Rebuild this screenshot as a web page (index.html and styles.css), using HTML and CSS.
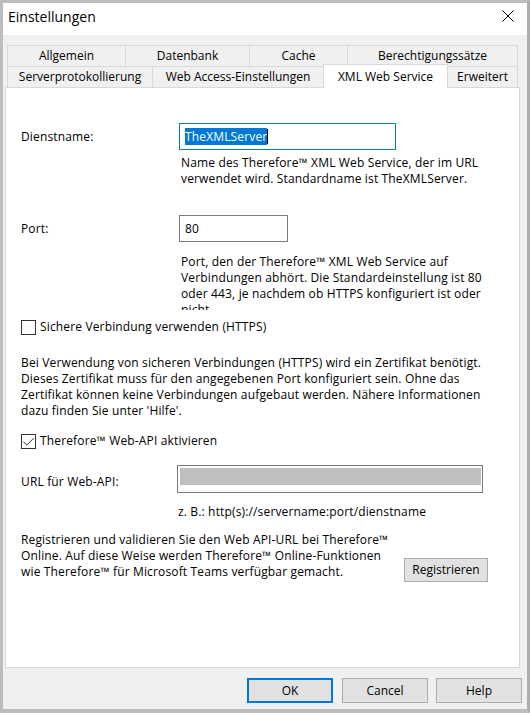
FILE: index.html
```html
<!DOCTYPE html>
<html lang="de">
<head>
<meta charset="utf-8">
<title>Einstellungen</title>
<link rel="stylesheet" href="styles.css">
</head>
<body>
<div class="window">
  <div class="titlebar">
    <span class="title">Einstellungen</span>
    <svg class="close" width="12" height="12" viewBox="0 0 12 12"><path d="M0.5 0.5 L11.5 11.5 M11.5 0.5 L0.5 11.5" stroke="#000" stroke-width="1" fill="none"/></svg>
  </div>
  <div class="dialog">
    <div class="tabs">
      <div class="tabrow">
        <div class="tab w-allg">Allgemein</div>
        <div class="tab w-daten">Datenbank</div>
        <div class="tab w-cache">Cache</div>
        <div class="tab w-berecht">Berechtigungssätze</div>
      </div>
      <div class="tabrow">
        <div class="tab w-server">Serverprotokollierung</div>
        <div class="tab w-web">Web Access-Einstellungen</div>
        <div class="tab w-xml selected">XML Web Service</div>
        <div class="tab w-erw">Erweitert</div>
      </div>
    </div>
    <div class="panel">
      <div class="field-row row-name">
        <span class="label">Dienstname:</span>
        <div class="textbox focused w-name"><span class="selection">TheXMLServer</span><span class="caret"></span></div>
      </div>
      <p class="desc desc-name">Name des Therefore™ XML Web Service, der im URL<br>verwendet wird. Standardname ist TheXMLServer.</p>

      <div class="field-row row-port">
        <span class="label">Port:</span>
        <div class="textbox w-port">80</div>
      </div>
      <p class="desc desc-port">Port, den der Therefore™ XML Web Service auf<br>Verbindungen abhört. Die Standardeinstellung ist 80<br>oder 443, je nachdem ob HTTPS konfiguriert ist oder<br>nicht.</p>

      <div class="check check-https">
        <svg class="box" width="15" height="15" viewBox="0 0 15 15"><rect x="0.5" y="0.5" width="14" height="14" fill="#fff" stroke="#333"/></svg>
        <span>Sichere Verbindung verwenden (HTTPS)</span>
      </div>

      <p class="para para-https">Bei Verwendung von sicheren Verbindungen (HTTPS) wird ein Zertifikat benötigt.<br>Dieses Zertifikat muss für den angegebenen Port konfiguriert sein. Ohne das<br>Zertifikat können keine Verbindungen aufgebaut werden. Nähere Informationen<br>dazu finden Sie unter 'Hilfe'.</p>

      <div class="check check-api">
        <svg class="box" width="15" height="15" viewBox="0 0 15 15"><rect x="0.5" y="0.5" width="14" height="14" fill="#fff" stroke="#333"/><path d="M2.3 7.6 L5.8 11.2 L12.6 4.2" fill="none" stroke="#333" stroke-width="1"/></svg>
        <span>Therefore™ Web-API aktivieren</span>
      </div>

      <div class="field-row row-url">
        <span class="label label-url">URL für Web-API:</span>
        <div class="textbox w-url"><div class="redacted"></div></div>
      </div>
      <p class="example">z. B.: http(s)://servername:port/dienstname</p>

      <div class="register">
        <p class="para para-register">Registrieren und validieren Sie den Web API-URL bei Therefore™<br>Online. Auf diese Weise werden Therefore™ Online-Funktionen<br>wie Therefore™ für Microsoft Teams verfügbar gemacht.</p>
        <div class="btn btn-register">Registrieren</div>
      </div>
    </div>
    <div class="buttons">
      <div class="btn btn-dlg btn-ok">OK</div>
      <div class="btn btn-dlg">Cancel</div>
      <div class="btn btn-dlg">Help</div>
    </div>
  </div>
</div>
</body>
</html>
```
FILE: styles.css
```css
html, body {
  margin: 0;
  padding: 0;
  background: #ffffff;
}

body {
  font-family: "Open Sans", "Noto Sans", "DejaVu Sans", sans-serif;
  font-size: 12px;
  color: #000;
}

.window {
  box-sizing: border-box;
  width: 530px;
  height: 713px;
  border: 3px solid #bdbdbd;
  border-bottom-width: 4px;
  border-right-color: #adadad;
  background: #f0f0f0;
  display: flex;
  flex-direction: column;
}

.titlebar {
  height: 32px;
  background: #ffffff;
  display: flex;
  align-items: flex-start;
  justify-content: space-between;
  padding: 0 13px 0 5px;
  flex: none;
}

.title {
  font-size: 14px;
  line-height: 20px;
  padding-top: 4px;
  color: #000;
}

.close {
  margin-top: 7px;
  display: block;
}

.dialog {
  padding-top: 10px;
  display: flex;
  flex-direction: column;
}

.tabs {
  margin-left: 4px;
}

.tabrow {
  display: flex;
  height: 21px;
  align-items: flex-start;
}

.tab {
  box-sizing: border-box;
  height: 21px;
  border: 1px solid #d9d9d9;
  border-bottom: 0;
  margin-right: -1px;
  background: #f0f0f0;
  display: flex;
  align-items: center;
  justify-content: center;
  white-space: nowrap;
  line-height: 16px;
}

.tab.selected {
  position: relative;
  z-index: 1;
  margin-top: -2px;
  height: 24px;
  background: #ffffff;
  padding-top: 1px;
}

.w-allg { width: 119px; }
.w-daten { width: 125px; }
.w-cache { width: 99px; }
.w-berecht { width: 171px; }
.w-server { width: 146px; }
.w-web { width: 172px; }
.w-xml { width: 125px; }
.w-erw { width: 71px; }

.panel {
  box-sizing: border-box;
  margin-left: 2px;
  width: 515px;
  height: 581px;
  border: 1px solid #d9d9d9;
  background: #ffffff;
  padding-left: 15px;
  letter-spacing: 0.15px;
  display: flex;
  flex-direction: column;
}

.panel p {
  margin: 0;
  line-height: 16px;
  white-space: nowrap;
}

.field-row {
  display: grid;
  grid-template-columns: 158px auto;
  align-items: center;
}

.label {
  line-height: 16px;
  padding-top: 1px;
}

.textbox {
  box-sizing: border-box;
  height: 27px;
  border: 1px solid #7a7a7a;
  background: #fff;
  padding-left: 5px;
  display: flex;
  align-items: center;
  line-height: 16px;
}

.textbox.focused {
  border-color: #0078d7;
}

.w-name { width: 217px; }
.w-port { width: 109px; }

.selection {
  background: #0078d7;
  color: #ffffff;
  line-height: 17px;
}

.caret {
  width: 1px;
  height: 15px;
  background: #000;
}

.row-name { margin-top: 35px; }

.desc {
  margin-left: 158px !important;
  padding-left: 2px;
}

.desc-name { margin-top: 5px !important; }

.row-port { margin-top: 28px; }

.desc-port {
  margin-top: 12px !important;
  height: 56px;
  overflow: hidden;
}

.check {
  display: flex;
  align-items: center;
  gap: 4px;
  height: 16px;
  line-height: 16px;
}

.check .box {
  display: block;
  flex: none;
}

.check-https { margin-top: 9px; }

.para-https { margin-top: 20px !important; }

.check-api { margin-top: 14px; }

.row-url {
  margin-top: 16px;
  grid-template-columns: 156px auto;
}

.label-url { padding-top: 5px; }

.w-url {
  width: 306px;
  height: 28px;
  padding: 2px 0 0 2px;
  align-items: flex-start;
}

.redacted {
  width: 301px;
  height: 17px;
  background: #c0c0c0;
}

.example {
  margin-top: 11px !important;
  margin-left: 157px !important;
}

.register {
  margin-top: 12px;
  display: flex;
  align-items: flex-start;
}

.para-register {
  width: 383px;
}

.btn {
  box-sizing: border-box;
  background: #e1e1e1;
  border: 1px solid #adadad;
  display: flex;
  align-items: center;
  justify-content: center;
  letter-spacing: 0;
  line-height: 16px;
  white-space: nowrap;
}

.btn-register {
  margin-top: 26px;
  width: 84px;
  height: 24px;
}

.buttons {
  display: flex;
  justify-content: flex-end;
  gap: 8px;
  margin-top: 10px;
  padding-right: 5px;
}

.btn-dlg {
  width: 86px;
  height: 25px;
}

.btn-ok {
  border: 2px solid #0078d7;
  margin-right: 1px;
}
```
